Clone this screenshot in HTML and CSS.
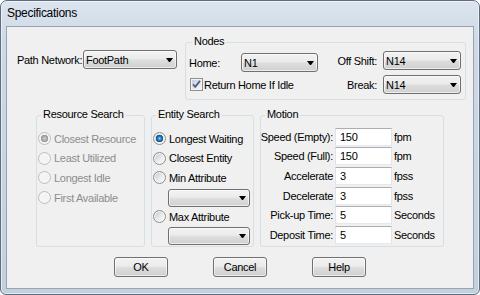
FILE: index.html
```html
<!DOCTYPE html>
<html lang="en">
<head>
  <meta charset="UTF-8" />
  <title>Specifications</title>
  <link rel="stylesheet" href="styles.css">
</head>
<body>
  <div class="window">
    <div class="titlebar">Specifications</div>

    <div class="client">
      <div class="top-row">
        <div class="path-net">
          <span>Path Network:</span>
          <div class="combo combo-path">FootPath</div>
        </div>

        <div class="group nodes">
          <div class="group-title">Nodes</div>
          <div class="nodes-body">
            <div class="nodes-left">
              <div class="home-row">
                <span class="home-label">Home:</span>
                <div class="combo combo-node">N1</div>
              </div>
              <div class="check-row">
                <svg class="checkbox" width="13" height="13" viewBox="0 0 13 13">
                  <defs>
                    <linearGradient id="cbfill" x1="0" y1="0" x2="1" y2="1">
                      <stop offset="0" stop-color="#c9ced6"/>
                      <stop offset="1" stop-color="#f7f7f7"/>
                    </linearGradient>
                  </defs>
                  <rect x="0.5" y="0.5" width="12" height="12" fill="#f4f4f4" stroke="#8e8f8f"/>
                  <rect x="2" y="2" width="9" height="9" fill="url(#cbfill)"/>
                  <path d="M3 6.3 L5.2 8.9 L10 2.9" fill="none" stroke="#4a5d85" stroke-width="1.7"/>
                </svg>
                <span>Return Home If Idle</span>
              </div>
            </div>
            <div class="nodes-right">
              <span class="right-label">Off Shift:</span>
              <div class="combo combo-node-r">N14</div>
              <span class="right-label">Break:</span>
              <div class="combo combo-node-r">N14</div>
            </div>
          </div>
        </div>
      </div>

      <div class="mid-row">
        <div class="group resource">
          <div class="group-title">Resource Search</div>
          <div class="radio-list disabled">
            <div class="radio-row"><span class="radio dis on"></span>Closest Resource</div>
            <div class="radio-row"><span class="radio dis"></span>Least Utilized</div>
            <div class="radio-row"><span class="radio dis"></span>Longest Idle</div>
            <div class="radio-row"><span class="radio dis"></span>First Available</div>
          </div>
        </div>

        <div class="group entity">
          <div class="group-title">Entity Search</div>
          <div class="radio-list">
            <div class="radio-row"><span class="radio on"></span>Longest Waiting</div>
            <div class="radio-row"><span class="radio"></span>Closest Entity</div>
            <div class="radio-row"><span class="radio"></span>Min Attribute</div>
            <div class="combo combo-attr"></div>
            <div class="radio-row"><span class="radio"></span>Max Attribute</div>
            <div class="combo combo-attr"></div>
          </div>
        </div>

        <div class="group motion">
          <div class="group-title">Motion</div>
          <div class="motion-grid">
            <span class="m-label">Speed (Empty):</span><div class="text-box">150</div><span>fpm</span>
            <span class="m-label">Speed (Full):</span><div class="text-box">150</div><span>fpm</span>
            <span class="m-label">Accelerate</span><div class="text-box">3</div><span>fpss</span>
            <span class="m-label">Decelerate</span><div class="text-box">3</div><span>fpss</span>
            <span class="m-label">Pick-up Time:</span><div class="text-box">5</div><span>Seconds</span>
            <span class="m-label">Deposit Time:</span><div class="text-box">5</div><span>Seconds</span>
          </div>
        </div>
      </div>

      <div class="button-row">
        <button class="button">OK</button>
        <button class="button">Cancel</button>
        <button class="button">Help</button>
      </div>
    </div>
  </div>
</body>
</html>
```

FILE: styles.css
```css
body {
  margin: 0;
  background: #fff;
  font-family: "Liberation Sans", Arial, sans-serif;
  font-size: 11px;
  letter-spacing: -0.3px;
  color: #000;
}
.window {
  width: 480px;
  height: 295px;
  box-sizing: border-box;
  border: 1px solid #5f6e7e;
  border-radius: 7px 7px 6px 6px;
  padding: 0 5px 5px;
  background: linear-gradient(#dce5ef, #cdd9e6 40px, #c3d0de);
  box-shadow: inset 0 0 0 1px rgba(255, 255, 255, 0.55);
}
.titlebar {
  height: 25px;
  line-height: 25px;
  padding-left: 1px;
  font-size: 12px;
}
.client {
  height: 261px;
  border: 1px solid #97a4b2;
  background: #f0f0f0;
  display: flex;
  flex-direction: column;
}

/* top row */
.top-row {
  display: flex;
  align-items: flex-start;
  padding: 15px 0 0 10px;
}
.path-net {
  display: flex;
  align-items: center;
  justify-content: space-between;
  width: 160px;
  margin-top: 8px;
}
.combo {
  box-sizing: border-box;
  height: 19px;
  border: 1px solid #707070;
  border-radius: 3px;
  background: linear-gradient(#f3f3f3, #ebebeb 45%, #dddddd 55%, #d0d0d0);
  box-shadow: inset 0 0 0 1px rgba(255, 255, 255, 0.6);
  display: flex;
  align-items: center;
  padding: 0 3px 0 2px;
}
.combo::after {
  content: "";
  width: 1px;
  height: 0;
  margin-left: auto;
  border-top: 4px solid #000;
  border-left: 3px solid transparent;
  border-right: 3px solid transparent;
}
.combo-path {
  width: 94px;
}

.group {
  box-sizing: border-box;
  border: 1px solid #d5dfe5;
  border-radius: 3px;
}
.group-title {
  width: max-content;
  margin: -8px 0 0 4px;
  padding: 0 2px;
  line-height: 13px;
  background: #f0f0f0;
}

/* nodes */
.nodes {
  width: 281px;
  height: 58px;
  margin-left: 8px;
}
.nodes .group-title {
  margin-left: 6px;
}
.nodes-body {
  display: flex;
  justify-content: space-between;
  margin-top: 3px;
  padding: 0 4px 0 3px;
}
.nodes-left {
  padding-top: 2px;
}
.home-row {
  display: flex;
  align-items: center;
}
.home-label {
  width: 52px;
}
.combo-node {
  width: 77px;
}
.check-row {
  display: flex;
  align-items: center;
  gap: 1px;
  margin: 6px 0 0 1px;
}
.checkbox {
  display: block;
}
.nodes-right {
  display: grid;
  grid-template-columns: auto 78px;
  column-gap: 6px;
  row-gap: 5px;
  align-items: center;
}
.right-label {
  text-align: right;
}

/* middle row */
.mid-row {
  display: flex;
  justify-content: center;
  gap: 6px;
  margin-top: 15px;
}
.mid-row .group {
  height: 132px;
}
.resource {
  width: 109px;
}
.entity {
  width: 103px;
}
.motion {
  width: 184px;
}
.radio-list {
  padding: 8px 0 0 1px;
}
.radio-list.disabled {
  color: #8d8d8d;
}
.radio-row {
  display: flex;
  align-items: center;
  gap: 3px;
  height: 19.6px;
}
.radio {
  flex: none;
  box-sizing: border-box;
  width: 13px;
  height: 13px;
  border-radius: 50%;
  border: 1px solid #8e8f8f;
  background: linear-gradient(135deg, #c2c4c7, #eeeeee 60%, #fbfbfb);
  box-shadow: inset 0 0 0 1px #f6f6f6;
}
.radio.on {
  background: radial-gradient(circle, #9fd8fb 0, #2f8fd4 1.5px, #17568f 3px, #2b5f8e 3.5px, transparent 4px),
    linear-gradient(135deg, #c2c4c7, #eeeeee 60%, #fbfbfb);
}
.radio.dis {
  border-color: #bcbdbe;
  background: #f4f4f4;
}
.radio.dis.on {
  background: radial-gradient(circle, #cfcfcf 0, #a6a6a6 2.5px, #9a9a9a 3.5px, transparent 4px), #f4f4f4;
}
.combo-attr {
  width: 82px;
  height: 18px;
  margin: 1px 0 0 15px;
}

/* motion */
.motion-grid {
  display: grid;
  grid-template-columns: 72px 57px auto;
  grid-auto-rows: 19.6px;
  column-gap: 2px;
  align-items: center;
  padding-top: 6px;
}
.m-label {
  display: flex;
  justify-content: flex-end;
  white-space: nowrap;
}
.text-box {
  box-sizing: border-box;
  height: 18px;
  line-height: 16px;
  border: 1px solid;
  border-color: #abadb3 #e2e3ea #e3e9ef #e2e3ea;
  background: #fff;
  padding-left: 4px;
}

/* buttons */
.button-row {
  display: flex;
  justify-content: center;
  gap: 45px;
  margin-top: 10px;
}
.button {
  width: 54px;
  height: 20px;
  padding: 0;
  font: inherit;
  letter-spacing: inherit;
  color: #000;
  border: 1px solid #707070;
  border-radius: 3px;
  background: linear-gradient(#f2f2f2, #ebebeb 45%, #dddddd 55%, #cfcfcf);
  box-shadow: inset 0 0 0 1px rgba(255, 255, 255, 0.6);
}
```
